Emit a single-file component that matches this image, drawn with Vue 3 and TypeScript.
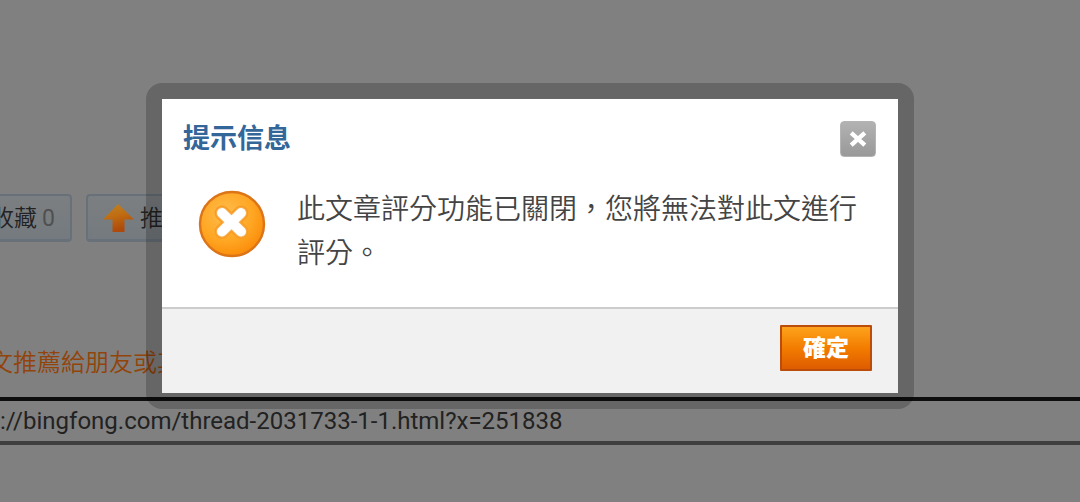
<script setup lang="ts">
import { ref } from 'vue'

const open = ref(true)
const link = ref('://bingfong.com/thread-2031733-1-1.html?x=251838')
const favorites = 0
</script>

<template>
  <div class="page">
    <main class="thread">
      <div class="actions">
        <button type="button" class="action">收藏 <span class="count">{{ favorites }}</span></button>
        <button type="button" class="action">
          <svg class="arrow" viewBox="0 0 32 30" aria-hidden="true">
            <defs>
              <linearGradient id="arrow-fill" x1="0" y1="0" x2="0.3" y2="1">
                <stop offset="0" stop-color="#bd8424" />
                <stop offset="0.5" stop-color="#c06c12" />
                <stop offset="1" stop-color="#ad4a0b" />
              </linearGradient>
            </defs>
            <path d="M15 0 31 15.500H21.500V28H9.500V15.500H0Z" fill="url(#arrow-fill)" />
          </svg>
          推
        </button>
      </div>
      <label class="share" for="share-link">文推薦給朋友或其</label>
      <input id="share-link" v-model="link" class="link" type="text" readonly />
    </main>

    <div v-if="open" class="overlay">
      <section class="dialog" role="alertdialog" aria-labelledby="dialog-title" aria-describedby="dialog-text">
        <header class="head">
          <h1 id="dialog-title">提示信息</h1>
          <button type="button" class="close" aria-label="關閉" @click="open = false">
            <svg viewBox="0 0 36 36" aria-hidden="true">
              <path d="M12.500 13 23.500 23M23.500 13 12.500 23" stroke="#fff" stroke-width="4.600" stroke-linecap="square" />
            </svg>
          </button>
        </header>
        <div class="body">
          <svg class="error" viewBox="0 0 68 68" aria-hidden="true">
            <defs>
              <radialGradient id="disc" cx="0.4" cy="0.35" r="0.65">
                <stop offset="0" stop-color="#ffbd4c" />
                <stop offset="0.65" stop-color="#ffa623" />
                <stop offset="1" stop-color="#fb8f0c" />
              </radialGradient>
            </defs>
            <circle cx="34" cy="34" r="32" fill="url(#disc)" stroke="#dc7418" stroke-width="2.400" />
            <g fill="none" stroke-linecap="round">
              <path d="M24 23 43 41.500M43 23 24 41.500" stroke="#f79c26" stroke-width="15" />
              <path d="M24 23 43 41.500M43 23 24 41.500" stroke="#f9b04e" stroke-width="12" />
              <path d="M24 23 43 41.500M43 23 24 41.500" stroke="#fff" stroke-width="10" />
            </g>
          </svg>
          <p id="dialog-text">此文章評分功能已關閉，您將無法對此文進行評分。</p>
        </div>
        <footer class="foot">
          <button type="button" class="confirm" @click="open = false">確定</button>
        </footer>
      </section>
    </div>
  </div>
</template>

<style>
body {
  margin: 0;
  background: #808080;
}
</style>

<style scoped>
.page {
  position: relative;
  min-height: 100vh;
  overflow: hidden;
  background: #808080;
  font-family: Roboto, "Noto Sans CJK TC", sans-serif;
}

.page *,
.page {
  box-sizing: border-box;
}

button,
input {
  margin: 0;
  font-family: inherit;
}

.thread {
  padding-top: 194px;
}

.actions {
  display: flex;
  gap: 14px;
  margin-left: -26px;
}

.action {
  display: flex;
  align-items: center;
  gap: 5px;
  height: 48px;
  padding: 2px 15px 0;
  border: 2px solid #68717a;
  border-bottom-width: 3px;
  border-radius: 4px;
  background: linear-gradient(#7c7f81, #747a7f);
  color: #222;
  font-size: 23px;
  line-height: 32px;
  font-weight: 350;
  white-space: nowrap;
}

.count {
  color: #505050;
  font-weight: 400;
}

.arrow {
  width: 32px;
  height: 30px;
}

.share {
  display: block;
  margin: 104px 0 0 -11px;
  color: #92440a;
  font-size: 24px;
  line-height: 34px;
  font-weight: 350;
}

.link {
  display: block;
  width: 100%;
  height: 48px;
  margin-top: 17px;
  padding: 0;
  border: solid #0e0e0e;
  border-width: 4px 0;
  border-bottom-color: #3f3f3f;
  background: #808080;
  color: #222;
  font-size: 24px;
  outline: none;
}

.overlay {
  position: absolute;
  inset: 0;
  padding: 83px 166px 0 146px;
}

.dialog {
  border: 16px solid rgba(0, 0, 0, 0.2);
  border-radius: 16px;
  background: #fff;
  background-clip: padding-box;
}

.head {
  display: flex;
  justify-content: space-between;
  align-items: flex-start;
  padding: 22px 22px 0 21px;
}

h1 {
  margin: 0;
  color: #336699;
  font-size: 27px;
  line-height: 36px;
  font-weight: 700;
}

.close {
  width: 36px;
  height: 36px;
  padding: 0;
  border: 1px solid #b4b4b4;
  border-radius: 4px;
  background: linear-gradient(#b2b2b2, #999);
}

.close svg {
  display: block;
  width: 34px;
  height: 34px;
}

.body {
  display: flex;
  align-items: flex-start;
  gap: 31px;
  padding: 31px 36px 31px 36px;
}

.error {
  flex: none;
  width: 68px;
  height: 68px;
  margin-top: 2px;
}

p {
  margin: 0;
  color: #444;
  font-size: 28px;
  line-height: 44px;
  font-weight: 350;
}

.foot {
  display: flex;
  justify-content: flex-end;
  padding: 16px 26px 22px;
  border-top: 2px solid #ccc;
  background: #f1f1f1;
}

.confirm {
  height: 46px;
  padding: 1px 21px 0;
  border: 2px solid #bb4c0a;
  border-radius: 1px;
  background: linear-gradient(#fda31b, #f37c00 50%, #de5c00);
  color: #fff;
  font-size: 23px;
  line-height: 32px;
  font-weight: 900;
}
</style>
